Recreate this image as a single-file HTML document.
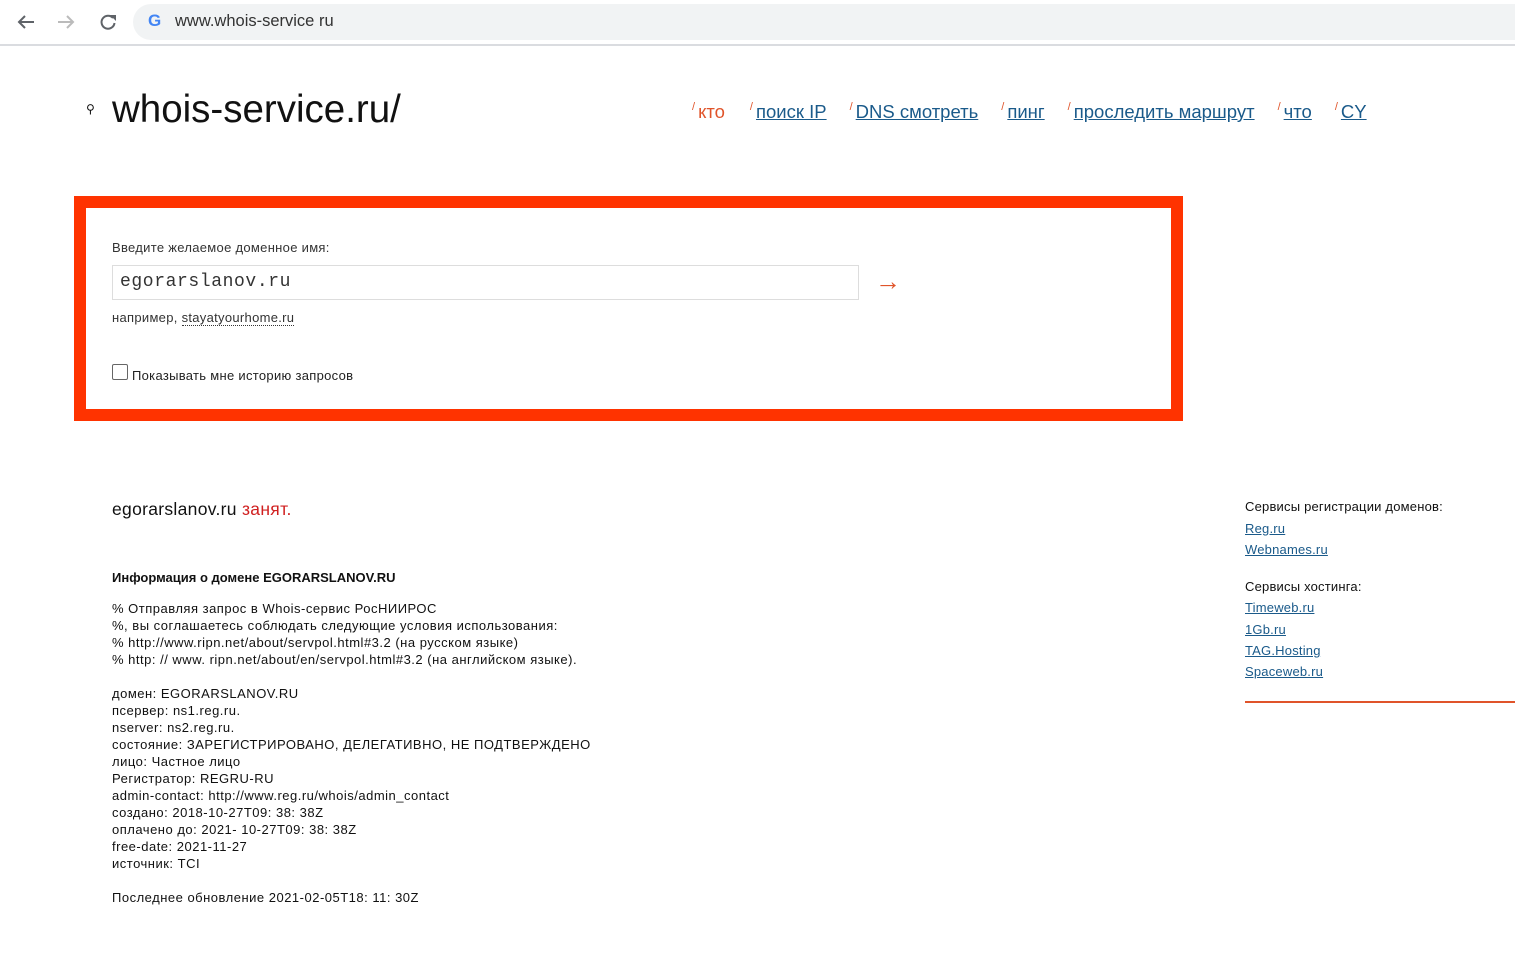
<!DOCTYPE html>
<html><head><meta charset="utf-8"><style>
body{margin:0;width:1515px;height:960px;background:#fff;font-family:"Liberation Sans","DejaVu Sans",sans-serif;color:#111;position:relative;overflow:hidden}
.a{position:absolute;white-space:nowrap}
a{color:#1a5a8a;text-decoration:underline}
.nav a{color:#1a5a8a;font-size:18.5px}
.nav span{color:#e0542a;font-size:11px;vertical-align:top;margin-right:3px}
.sm{font-size:13px}
.p{font-size:13px;line-height:17px;letter-spacing:0.5px}
</style></head><body>
<div class="a" style="left:0;top:0;width:1515px;height:44px;background:#fff;border-bottom:2px solid #dadce0"></div>
<svg class="a" style="left:16px;top:12px" width="110" height="20"><path d="M18 10H3M9 4L3 10l6 6" stroke="#5f6368" stroke-width="2" fill="none"/><path d="M42 10h15M51 4l6 6-6 6" stroke="#bbb" stroke-width="2" fill="none"/><path d="M97 6a6.5 6.5 0 1 0 1.5 5" stroke="#5f6368" stroke-width="2" fill="none"/><path d="M94 3h6v6z" fill="#5f6368"/></svg>
<div class="a" style="left:133px;top:4px;width:1400px;height:36px;background:#f1f3f4;border-radius:18px"></div>
<div class="a" style="left:148px;top:11px;font-size:17px;font-weight:bold;color:#4285f4">G</div>
<div class="a" style="left:175px;top:12px;font-size:16.5px;color:#333">www.whois-service ru</div>
<div class="a" style="left:86px;top:102px;font-size:12px">⚲</div>
<div class="a" style="left:112px;top:88px;font-size:38.5px;color:#111">whois-service.ru/</div>
<div class="a nav" style="left:692px;top:101px">
<span>/</span><a style="color:#e0542a;text-decoration:none;margin-right:25px">кто</a><span>/</span><a style="margin-right:23px">поиск IP</a><span>/</span><a style="margin-right:23px">DNS смотреть</a><span>/</span><a style="margin-right:23px">пинг</a><span>/</span><a style="margin-right:23px">проследить маршрут</a><span>/</span><a style="margin-right:23px">что</a><span>/</span><a>CY</a></div>
<div class="a" style="left:74px;top:196px;width:1085px;height:201px;border:12px solid #ff3300"></div>
<div class="a sm" style="left:112px;top:240px;color:#333;letter-spacing:0.3px">Введите желаемое доменное имя:</div>
<div class="a" style="left:112px;top:265px;width:745px;height:33px;border:1px solid #ddd"></div>
<div class="a" style="left:120px;top:272px;font-family:'Liberation Mono',monospace;font-size:18px;color:#333;letter-spacing:0.6px">egorarslanov.ru</div>
<div class="a" style="left:875px;top:266px;font-size:26px;color:#e0542a">→</div>
<div class="a sm" style="left:112px;top:310px;color:#333;letter-spacing:0.3px">например, <span style="border-bottom:1px dotted #333">stayatyourhome.ru</span></div>
<div class="a" style="left:112px;top:364px;width:14px;height:14px;border:1px solid #666;border-radius:2px"></div>
<div class="a sm" style="left:132px;top:368px;color:#222;letter-spacing:0.3px">Показывать мне историю запросов</div>
<div class="a" style="left:112px;top:499px;font-size:17.5px;letter-spacing:0.3px">egorarslanov.ru <span style="color:#d02020">занят.</span></div>
<div class="a sm" style="left:112px;top:570px;font-weight:bold">Информация о домене EGORARSLANOV.RU</div>
<div class="a p" style="left:112px;top:600px">% Отправляя запрос в Whois-сервис РосНИИРОС<br>%, вы соглашаетесь соблюдать следующие условия использования:<br>% http://www.ripn.net/about/servpol.html#3.2 (на русском языке)<br>% http: // www. ripn.net/about/en/servpol.html#3.2 (на английском языке).<br><br>домен: EGORARSLANOV.RU<br>псервер: ns1.reg.ru.<br>nserver: ns2.reg.ru.<br>состояние: ЗАРЕГИСТРИРОВАНО, ДЕЛЕГАТИВНО, НЕ ПОДТВЕРЖДЕНО<br>лицо: Частное лицо<br>Регистратор: REGRU-RU<br>admin-contact: http://www.reg.ru/whois/admin_contact<br>создано: 2018-10-27T09: 38: 38Z<br>оплачено до: 2021- 10-27T09: 38: 38Z<br>free-date: 2021-11-27<br>источник: TCI<br><br>Последнее обновление 2021-02-05T18: 11: 30Z</div>
<div class="a sm" style="left:1245px;top:496px;line-height:21.5px;letter-spacing:0.2px">Сервисы регистрации доменов:<br><a>Reg.ru</a><br><a>Webnames.ru</a></div>
<div class="a sm" style="left:1245px;top:576px;line-height:21.3px;letter-spacing:0.2px">Сервисы хостинга:<br><a>Timeweb.ru</a><br><a>1Gb.ru</a><br><a>TAG.Hosting</a><br><a>Spaceweb.ru</a></div>
<div class="a" style="left:1245px;top:701px;width:270px;height:2px;background:#e0542a"></div>
</body></html>
